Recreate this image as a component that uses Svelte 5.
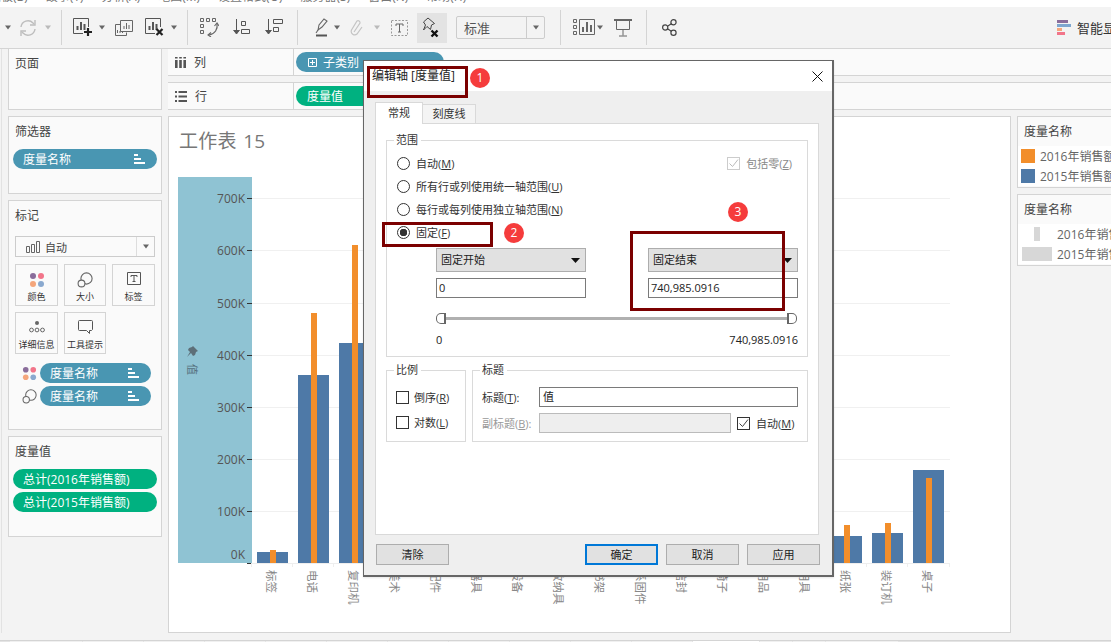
<script>
  const menu = ['仪表板(B)', '故事(T)', '分析(A)', '地图(M)', '设置格式(O)', '服务器(S)', '窗口(N)', '帮助(H)'];
  const ticks = [['700K', 198], ['600K', 250], ['500K', 303], ['400K', 355], ['300K', 407], ['200K', 459], ['100K', 511], ['0K', 563]];
  const bars = [
    ['标签', 552, 550], ['电话', 375, 313], ['复印机', 343, 245], ['美术', 500, 480], ['配件', 480, 470],
    ['器具', 400, 380], ['设备', 420, 400], ['收纳具', 450, 440], ['书架', 400, 380], ['系固件', 540, 530],
    ['信封', 530, 520], ['椅子', 340, 320], ['用品', 530, 520], ['用具', 530, 520], ['纸张', 536, 525],
    ['装订机', 533, 523], ['桌子', 470, 478]
  ];
  const tabs = [72, 60, 60, 60, 60, 60, 60, 60, 60, 60, 60, 66, 32, 32, 72];
</script>

{#snippet arrow(cls)}
  <svg class={cls} width="8" height="5" viewBox="0 0 8 5"><path d="M1 .5h6L4 4.500z" fill="#666" /></svg>
{/snippet}

{#snippet stair()}
  <svg class="stair" width="11" height="11" viewBox="0 0 11 11"><path d="M0 0h4v2H0zM0 4h7v2H0zM0 8h11v2H0z" fill="#fff" /></svg>
{/snippet}

{#snippet dots(size)}
  <svg width={size} height={size} viewBox="0 0 16 16">
    <circle cx="4" cy="4" r="3" fill="#8a6d9b" /><circle cx="12" cy="4" r="3" fill="#f2758a" />
    <circle cx="4" cy="12" r="3" fill="#f4a67c" /><circle cx="12" cy="12" r="3" fill="#8aa9cf" />
  </svg>
{/snippet}

{#snippet circles(size)}
  <svg width={size} height={size} viewBox="0 0 16 16" fill="#fafafa" stroke="#666" stroke-width="1.1">
    <circle cx="9.5" cy="6.5" r="5.6" /><circle cx="4.5" cy="11.5" r="3.4" />
  </svg>
{/snippet}

<div class="app">
  <div class="menu">
    {#each menu as m}<span>{m}</span>{/each}
  </div>

  <div class="toolbar">
    {@render arrow('ml4')}
    <svg class="ml7" width="18" height="18" viewBox="0 0 18 18" fill="none" stroke="#bdbdbd" stroke-width="1.4">
      <path d="M2 8a7 7 0 0 1 12-4l1 1M16 10a7 7 0 0 1-12 4l-1-1" />
      <path d="M16 1v5h-5M2 17v-5h5" />
    </svg>
    {@render arrow('ml7 dim')}
    <i class="sep ml9"></i>
    <svg class="ml11" width="20" height="19" viewBox="0 0 20 19" fill="none" stroke="#555">
      <path d="M15.5 9V.5H.5v15H10" />
      <path d="M4.5 12V8M8 12V4M11.5 12V6" stroke-width="2" />
      <path d="M15 10v8M11 14h8" stroke="#222" stroke-width="2.2" />
    </svg>
    {@render arrow('ml5')}
    <svg class="ml9" width="18" height="16" viewBox="0 0 18 16" fill="none" stroke="#666">
      <path d="M5.5 4.5H.5v11h11v-3" /><path d="M5.5 .5h12v11h-12z" fill="#f3f3f3" />
      <path d="M9 9V6M11.5 9V3M14 9V5M2.5 13v-3M5 13v-2M7.500 13v-1" />
    </svg>
    <svg class="ml12" width="20" height="19" viewBox="0 0 20 19" fill="none" stroke="#555">
      <path d="M15.5 9V.5H.5v15H10" />
      <path d="M4.500 12V8M8 12V4M11.500 12V6" stroke-width="2" />
      <path d="M11.500 11l6 6M17.500 11l-6 6" stroke="#222" stroke-width="2.200" />
    </svg>
    {@render arrow('ml5')}
    <i class="sep ml9"></i>
    <svg class="ml12" width="19" height="19" viewBox="0 0 19 19" fill="none" stroke="#666">
      <path d="M.5 .5h3v3h-3zM6.500 .5h3v3h-3zM12.500 .500h3v3h-3zM.5 6.500h3v3h-3zM.5 12.500h3v3h-3z" />
      <path d="M17 6c1 5-2 10-8 11" stroke-width="1.200" />
      <path d="M14.500 8L17 5l2 3M11 14.500L8 17l3 2" stroke-width="1.100" />
    </svg>
    <svg class="ml14" width="17" height="17" viewBox="0 0 17 17" fill="none" stroke="#555">
      <path d="M3.500 0v14M.5 11l3 4 3-4" fill="#555" />
      <path d="M8.500 2.500h4v4h-4zM8.500 10.500h8v4h-8z" />
    </svg>
    <svg class="ml15" width="18" height="17" viewBox="0 0 18 17" fill="none" stroke="#555">
      <path d="M3.500 0v14M.5 11l3 4 3-4" fill="#555" />
      <path d="M8.500 .5h9v4h-9zM8.500 8.500h5v4h-5z" />
    </svg>
    <i class="sep ml14"></i>
    <svg class="ml15" width="15" height="19" viewBox="0 0 15 19" fill="none" stroke="#666" stroke-width="1.100">
      <path d="M5 12l1-5 5-6 3 2-5 6z" /><path d="M5 12l-2 3" /><path d="M3 17.500h11" stroke="#555" stroke-width="2" />
    </svg>
    {@render arrow('ml5')}
    <svg class="ml9" width="13" height="18" viewBox="0 0 13 18" fill="none" stroke="#c4c4c4" stroke-width="1.200">
      <path d="M4 13l6-9a2 2 0 0 0-3-2L1.500 11a3.500 3.500 0 0 0 5.500 4l5-7" />
    </svg>
    {@render arrow('ml10 dim')}
    <svg class="ml10" width="17" height="16" viewBox="0 0 17 16" fill="none" stroke="#999">
      <path d="M.5 .5h16v15H.5z" stroke-dasharray="2 1.500" />
      <path d="M5 6V4h7v2M8.500 4v8M7 12h3" stroke="#666" />
    </svg>
    <div class="pin ml9">
      <svg width="22" height="22" viewBox="0 0 22 22" fill="none" stroke="#444">
        <path d="M6 1l6.500 5.500-3 1.500-1 4.500-3.500-3L1.500 13 3.500 8 1.500 5z" fill="#e3e3e3" transform="translate(1 0)" />
        <path d="M10.500 13.500l6 6M16.500 13.500l-6 6" stroke="#111" stroke-width="2.400" />
      </svg>
    </div>
    <div class="combo ml9"><span>标准</span><b>{@render arrow('')}</b></div>
    <i class="sep ml15"></i>
    <svg class="ml12" width="22" height="17" viewBox="0 0 22 17" fill="none" stroke="#666">
      <path d="M.5 .5h3v3h-3zM.5 6.500h3v3h-3zM.5 12.500h3v3h-3zM6.500 .5h15v15h-15z" />
      <path d="M10 13V8M14 13V3M18 13V6" stroke-width="2" />
    </svg>
    {@render arrow('ml1')}
    <svg class="ml10" width="18" height="18" viewBox="0 0 18 18" fill="none" stroke="#666">
      <path d="M0 1h18" stroke-width="2" /><path d="M2.500 1.500h13v9h-13zM9 10.500v6M5 17h8" />
    </svg>
    <i class="sep ml14"></i>
    <svg class="ml15" width="15" height="17" viewBox="0 0 15 17" fill="none" stroke="#444" stroke-width="1.200">
      <circle cx="3.200" cy="8.500" r="2.600" /><circle cx="11.500" cy="3.200" r="2.600" /><circle cx="11.500" cy="13.800" r="2.600" />
      <path d="M5.500 7.200l3.800-2.500M5.500 9.800l3.800 2.500" />
    </svg>
    <div class="smart">
      <svg width="14" height="15" viewBox="0 0 14 15">
        <path d="M0 0h11v3H0z" fill="#8a6d9b" /><path d="M0 4h14v3H0z" fill="#7ea6cf" />
        <path d="M0 8h5v3H0z" fill="#f4a67c" /><path d="M0 12h8v3H0z" fill="#f2758a" />
      </svg>
      <span>智能显示</span>
    </div>
  </div>

  <div class="workspace">
    <aside class="left">
      <section class="card page"><h3>页面</h3></section>
      <section class="card filter">
        <h3>筛选器</h3>
        <div class="pill blue wide"><span>度量名称</span>{@render stair()}</div>
      </section>
      <section class="card marks">
        <h3>标记</h3>
        <div class="select">
          <svg width="14" height="12" viewBox="0 0 14 12" fill="none" stroke="#666"><path d="M.5 5.500h3v6h-3zM5.500 3.500h3v8h-3zM10.500 .5h3v11h-3z" /></svg>
          <span>自动</span>
          <b>{@render arrow('')}</b>
        </div>
        <div class="mark-grid">
          <div class="mk">{@render dots(16)}<span>颜色</span></div>
          <div class="mk">{@render circles(16)}<span>大小</span></div>
          <div class="mk">
            <svg width="14" height="13" viewBox="0 0 14 13" fill="none" stroke="#555"><path d="M.5 .5h13v12H.5z" /><path d="M4 5V3.500h6V5M7 3.500v6M5.500 9.500h3" /></svg>
            <span>标签</span>
          </div>
          <div class="mk">
            <svg width="16" height="14" viewBox="0 0 16 14" fill="#666"><circle cx="8" cy="3" r="2" /><g fill="none" stroke="#666"><circle cx="2.500" cy="10" r="1.900" /><circle cx="8" cy="10" r="1.900" /><circle cx="13.500" cy="10" r="1.900" /></g></svg>
            <span>详细信息</span>
          </div>
          <div class="mk">
            <svg width="15" height="14" viewBox="0 0 15 14" fill="none" stroke="#555"><path d="M1.500 .5h12a1 1 0 0 1 1 1v8l-1 1h-2v3l-3-3h-7a1 1 0 0 1-1-1v-8a1 1 0 0 1 1-1z" /></svg>
            <span>工具提示</span>
          </div>
        </div>
        <div class="encoding">
          <span class="enc-ic">{@render dots(15)}</span>
          <div class="pill blue"><span>度量名称</span>{@render stair()}</div>
        </div>
        <div class="encoding">
          <span class="enc-ic">{@render circles(15)}</span>
          <div class="pill blue"><span>度量名称</span>{@render stair()}</div>
        </div>
      </section>
      <section class="card values">
        <h3>度量值</h3>
        <div class="pill green wide"><span>总计(2016年销售额)</span></div>
        <div class="pill green wide"><span>总计(2015年销售额)</span></div>
      </section>
    </aside>

    <main class="center">
      <div class="shelf">
        <div class="shelf-label">
          <svg width="11" height="11" viewBox="0 0 11 11" fill="#555"><path d="M0 3h2.600v8H0zM4.200 3h2.600v8H4.200zM8.400 3H11v8H8.400zM0 0h2.600v1.500H0zM4.200 0h2.600v1.500H4.200zM8.400 0H11v1.500H8.400z" /></svg>
          <span>列</span>
        </div>
        <div class="pill blue shelf-pill">
          <svg width="9" height="9" viewBox="0 0 9 9" fill="none" stroke="#fff"><path d="M.5 .5h8v8h-8zM4.500 2v5M2 4.500h5" /></svg>
          <span>子类别</span>
        </div>
      </div>
      <div class="shelf second">
        <div class="shelf-label">
          <svg width="12" height="11" viewBox="0 0 12 11" fill="#555"><path d="M0 0h2v2H0zM3.500 0H12v2H3.500zM0 4.500h2v2H0zM3.500 4.500H12v2H3.500zM0 9h2v2H0zM3.500 9H12v2H3.500z" /></svg>
          <span>行</span>
        </div>
        <div class="pill green shelf-pill"><span>度量值</span></div>
      </div>

      <div class="body">
        <section class="sheet">
          <h1>工作表 15</h1>
          <svg class="chart" width="841" height="466" viewBox="169 165 841 466">
            <rect x="178" y="177" width="74" height="386" fill="#8fc3d3" />
            <path d="M193 346l5 5-2 1-1 3-2 1-2-3-4 4 3-5-2-2 1-2 3-1z" fill="#5d6f78" />
            <text class="band-text" transform="rotate(90 188 364)" x="188" y="364">值</text>
            {#each ticks as [label, y]}
              <line x1="252" x2="950" y1={y + .5} y2={y + .5} stroke="#f0f0f0" />
              <line x1="247" x2="252" y1={y + .5} y2={y + .5} stroke="#333" />
              <text class="tick" x="245" y={label === '0K' ? y - 4 : y + 4.500} text-anchor="end">{label}</text>
            {/each}
            {#each bars as [name, blue, orange], i}
              {@const x = 257 + i * 41}
              <rect {x} y={blue} width="31" height={563 - blue} fill="#4e79a7" />
              <rect x={x + 13} y={orange} width="6" height={563 - orange} fill="#f28e2b" />
              <line x1={x - 5.500} x2={x - 5.500} y1="563" y2="567" stroke="#eee" />
              <text class="cat" transform="rotate(90 {x + 10} 570)" x={x + 10} y="570">{name}</text>
            {/each}
            <line x1="252" x2="950" y1="563.500" y2="563.500" stroke="#eee" />
            <line x1="949.500" x2="949.500" y1="563" y2="567" stroke="#eee" />
          </svg>
        </section>
        <aside class="legends">
          <section class="legend">
            <h4>度量名称</h4>
            <div class="lg-row"><i class="sw orange"></i><span>2016年销售额</span></div>
            <div class="lg-row"><i class="sw steel"></i><span>2015年销售额</span></div>
          </section>
          <section class="legend">
            <h4>度量名称</h4>
            <div class="lg-row size"><span class="sz-wrap"><i class="thin"></i></span><span>2016年销售额</span></div>
            <div class="lg-row size"><span class="sz-wrap"><i class="fat"></i></span><span>2015年销售额</span></div>
          </section>
        </aside>
      </div>
    </main>
  </div>

  <div class="tabs">
    {#each tabs as w, i}<span class="tab" class:on={i === 11} style:width="{w}px"></span>{/each}
  </div>

  <div class="dialog">
    <header class="dlg-title">
      <span>编辑轴 [度量值]</span>
      <svg width="11" height="11" viewBox="0 0 11 11" stroke="#111" fill="none"><path d="M.5 .5l10 10M10.500 .5l-10 10" /></svg>
    </header>
    <div class="dlg-body">
      <div class="dlg-tabs"><span class="dlg-tab on">常规</span><span class="dlg-tab">刻度线</span></div>
      <div class="panel">
        <div class="group range">
          <span class="legend-t">范围</span>
          <div class="radio-row first">
            <label class="rd"><i class="radio"></i><span>自动(<u>M</u>)</span></label>
            <label class="rd disabled"><i class="check dis"><svg width="11" height="11" viewBox="0 0 11 11" fill="none" stroke="#bbb"><path d="M1.500 5.500l3 3 5.500-7" /></svg></i><span>包括零(<u>Z</u>)</span></label>
          </div>
          <label class="rd radio-row"><i class="radio"></i><span>所有行或列使用统一轴范围(<u>U</u>)</span></label>
          <label class="rd radio-row"><i class="radio"></i><span>每行或每列使用独立轴范围(<u>N</u>)</span></label>
          <label class="rd radio-row"><i class="radio sel"></i><span>固定(<u>F</u>)</span></label>
          <div class="fixed">
            <div class="dd"><span>固定开始</span><svg width="9" height="5" viewBox="0 0 9 5"><path d="M0 0h9L4.500 5z" fill="#111" /></svg></div>
            <div class="dd"><span>固定结束</span><svg width="9" height="5" viewBox="0 0 9 5"><path d="M0 0h9L4.500 5z" fill="#111" /></svg></div>
            <div class="field">0</div>
            <div class="field">740,985.0916</div>
          </div>
          <div class="slider"><i class="hd l"></i><i class="track"></i><i class="hd r"></i></div>
          <div class="ends"><span>0</span><span>740,985.0916</span></div>
        </div>
        <div class="row2">
          <div class="group scale">
            <span class="legend-t">比例</span>
            <label class="rd cb"><i class="check"></i><span>倒序(<u>R</u>)</span></label>
            <label class="rd cb"><i class="check"></i><span>对数(<u>L</u>)</span></label>
          </div>
          <div class="group titlebox">
            <span class="legend-t">标题</span>
            <div class="title-grid">
              <span>标题(<u>T</u>):</span>
              <div class="field full">值</div>
              <span class="muted">副标题(<u>B</u>):</span>
              <div class="sub-row">
                <div class="field off"></div>
                <label class="rd"><i class="check"><svg width="11" height="11" viewBox="0 0 11 11" fill="none" stroke="#444"><path d="M1.500 5.500l3 3 5.500-7" /></svg></i><span>自动(<u>M</u>)</span></label>
              </div>
            </div>
          </div>
        </div>
      </div>
      <footer class="dlg-foot">
        <button>清除</button>
        <span class="grow"></span>
        <button class="primary">确定</button>
        <button>取消</button>
        <button>应用</button>
      </footer>
    </div>
  </div>

  <i class="mark-box a"></i>
  <i class="mark-box b"></i>
  <i class="mark-box c"></i>
  <span class="badge one">1</span>
  <span class="badge two">2</span>
  <span class="badge three">3</span>
</div>

<style>
  :global(body) { margin: 0; }
  * { box-sizing: border-box; }
  .app {
    position: relative; width: 1111px; height: 642px; overflow: hidden; background: #f3f3f3;
    font-family: "Open Sans", "Noto Sans CJK SC", sans-serif; font-size: 12px; color: #444;
  }
  .menu { height: 7px; background: #fff; overflow: hidden; display: flex; gap: 18px; margin-left: 0; padding-left: 0; }
  .menu span { margin-top: -11px; font-size: 12px; line-height: 16px; color: #777; white-space: nowrap; flex: none; }
  .menu span:first-child { margin-left: -23px; }

  .toolbar { height: 42px; display: flex; align-items: center; border-bottom: 1px solid #d4d4d4; }
  .toolbar > svg { flex: none; }
  .sep { width: 1px; height: 35px; background: #d4d4d4; flex: none; }
  :global(.ml1) { margin-left: 1px; } :global(.ml4) { margin-left: 4px; } :global(.ml5) { margin-left: 5px; }
  :global(.ml7) { margin-left: 7px; } :global(.ml9) { margin-left: 9px; } :global(.ml10) { margin-left: 10px; }
  :global(.ml11) { margin-left: 11px; } :global(.ml12) { margin-left: 12px; } :global(.ml14) { margin-left: 14px; }
  :global(.ml15) { margin-left: 15px; } :global(.dim) { opacity: .4; }
  .pin { width: 30px; height: 30px; background: #e3e3e3; display: flex; align-items: center; justify-content: center; flex: none; }
  .combo { width: 89px; height: 23px; border: 1px solid #ccc; border-radius: 2px; display: flex; align-items: center; background: #f3f3f3; font-size: 13px; color: #555; flex: none; }
  .combo span { flex: 1; padding-left: 7px; }
  .combo b { width: 18px; height: 100%; border-left: 1px solid #ccc; display: flex; align-items: center; justify-content: center; }
  .smart { margin-left: auto; width: 54px; flex: none; display: flex; align-items: center; gap: 6px; white-space: nowrap; font-size: 13px; color: #333; }
  .smart svg { flex: none; }

  .workspace { display: flex; height: 584px; padding-left: 1px; }
  .left { width: 167px; padding-left: 6px; padding-right: 6px; border-left: 1px solid #e2e2e2; display: flex; flex-direction: column; gap: 6px; flex: none; }
  .card { border: 1px solid #d4d4d4; background: #fafafa; padding: 0 0 0 6px; }
  .card h3 { margin: 0; font-size: 12px; font-weight: 400; color: #444; line-height: 16px; }
  .page { height: 61px; border-top: 0; padding-top: 7px; }
  .filter { height: 78px; padding-top: 7px; padding-left: 4px; }
  .filter h3, .values h3 { padding-left: 2px; }
  .marks { height: 230px; padding-top: 7px; }
  .values { height: 101px; padding-top: 7px; padding-left: 4px; }
  .filter .pill { margin-top: 9px; }
  .values .pill:first-of-type { margin-top: 9px; }
  .values .pill + .pill { margin-top: 3px; }

  .pill { height: 20px; border-radius: 10px; color: #fff; display: flex; align-items: center; padding-left: 10px; white-space: nowrap; }
  .blue { background: #4996b2; }
  .green { background: #00b180; }
  .wide { width: 144px; }
  .stair { margin-left: auto; margin-right: 12px; }

  .select { width: 140px; height: 21px; margin-top: 12px; border: 1px solid #ccc; background: #fafafa; display: flex; align-items: center; padding-left: 10px; gap: 5px; font-size: 11px; }
  .select b { margin-left: auto; width: 18px; height: 100%; border-left: 1px solid #ddd; display: flex; align-items: center; justify-content: center; }
  .mark-grid { display: grid; grid-template-columns: 43px 42px 43px; gap: 6px; margin-top: 7px; }
  .mk { height: 42px; border: 1px solid #d4d4d4; display: flex; flex-direction: column; align-items: center; justify-content: space-between; padding: 7px 0 1px; font-size: 9px; white-space: nowrap; line-height: 14px; color: #333; }
  .encoding { display: flex; align-items: center; margin-top: 3px; }
  .mark-grid + .encoding { margin-top: 9px; }
  .enc-ic { width: 25px; padding-left: 7px; display: flex; }
  .encoding .pill { width: 111px; }
  .encoding .stair { margin-right: 12px; }

  .center { flex: 1; min-width: 0; display: flex; flex-direction: column; }
  .shelf { height: 27px; flex: none; display: flex; border-bottom: 1px solid #d4d4d4; background: #fafafa; }
  .shelf.second { height: 28px; margin-top: 6px; border-top: 1px solid #d4d4d4; }
  .shelf-label { width: 126px; border-right: 1px solid #d4d4d4; display: flex; align-items: center; gap: 8px; padding-left: 7px; flex: none; }
  .shelf-pill { margin: 3px 0 0 2px; width: 148px; padding-left: 12px; gap: 6px; }
  .shelf.second .shelf-pill { margin-top: 3px; width: 80px; padding-left: 11px; }
  .body { display: flex; gap: 6px; margin-top: 6px; height: 517px; }
  .sheet { width: 843px; flex: none; border: 1px solid #d4d4d4; background: #fff; }
  .sheet h1 { margin: 0; height: 48px; padding: 11px 0 0 10px; font-size: 19px; line-height: 26px; font-weight: 400; color: #777; }
  .sheet h1 { word-spacing: 1px; letter-spacing: .3px; }
  .chart { display: block; }
  .tick { font-size: 12px; fill: #555; }
  .cat { font-size: 11.500px; fill: #888; }
  .band-text { font-size: 11px; fill: #55707c; }

  .legends { display: flex; flex-direction: column; gap: 6px; flex: 1; min-width: 0; }
  .legend { height: 72px; border: 1px solid #d4d4d4; border-right: 0; background: #fafafa; overflow: hidden; white-space: nowrap; }
  .legend h4 { margin: 0; height: 29px; padding: 7px 0 0 6px; font-size: 12px; font-weight: 400; line-height: 16px; }
  .lg-row { height: 20px; display: flex; align-items: center; gap: 5px; padding-left: 3px; background: #fff; color: #666; }
  .sw { width: 14px; height: 14px; flex: none; }
  .orange { background: #f28e2b; } .steel { background: #4e79a7; }
  .size { gap: 5px; padding-left: 4px; }
  .sz-wrap { width: 30px; height: 14px; display: flex; justify-content: center; flex: none; }
  .thin { width: 6px; height: 14px; background: #d7d7d7; }
  .fat { width: 30px; height: 14px; background: #d7d7d7; }

  .tabs { display: flex; height: 2px; padding-left: 10px; border-top: 1px solid #d4d4d4; gap: 1px; margin-top: 7px; background: #e4e4e4; }
  .tab { height: 100%; background: #f0f0f0; }
  .tab.on { background: #fff; }

  .dialog { position: absolute; left: 363px; top: 60px; width: 471px; height: 517px; border: 1px solid #666; border-width: 1px 2px 2px 1px; background: #efefef; color: #333; font-size: 11px; box-shadow: 0 1px 2px rgba(0, 0, 0, .1); }
  .dlg-title { height: 30px; background: #fff; display: flex; align-items: center; justify-content: space-between; padding: 0 9px 0 8px; font-size: 12px; color: #222; }
  .dlg-title span { margin-top: -2px; }
  .dlg-body { padding: 11px 13px 0 11px; }
  .dlg-tabs { display: flex; height: 21px; align-items: flex-end; position: relative; }
  .dlg-tab { width: 54px; height: 19px; background: #f4f4f4; border: 1px solid #d9d9d9; border-bottom: 0; text-align: center; line-height: 18px; margin-left: -1px; }
  .dlg-tab.on { width: 48px; height: 22px; margin: 0 0 -1px; background: #fff; line-height: 20px; position: relative; z-index: 1; }
  .panel { height: 412px; background: #fff; border: 1px solid #d9d9d9; padding: 16px 10px 0; }
  .group { border: 1px solid #dadada; position: relative; }
  .legend-t { position: absolute; left: 7px; top: -9px; background: #fff; padding: 0 3px 0 2px; line-height: 15px; }
  .range { height: 217px; padding: 11px 9px 0 10px; }
  .radio-row { height: 23px; display: flex; align-items: center; justify-content: space-between; }
  .radio-row.first { padding-right: 6px; }
  .rd { display: flex; align-items: center; gap: 6px; white-space: nowrap; }
  .rd span { margin-top: -1px; }
  .rd.radio-row { justify-content: flex-start; }
  .disabled { color: #888; gap: 6px; }
  .radio { width: 13px; height: 13px; border: 1px solid #333; border-radius: 50%; display: block; flex: none; background: #fff; }
  .radio.sel { background: radial-gradient(circle, #333 0 3.500px, #fff 4px); }
  .check { width: 13px; height: 13px; border: 1px solid #333; display: flex; align-items: center; justify-content: center; flex: none; background: #fff; }
  .check.dis { border-color: #ccc; }
  .fixed { margin: 4px 0 0 39px; display: grid; grid-template-columns: 150px 150px; column-gap: 62px; row-gap: 6px; }
  .dd { height: 24px; background: #e1e1e1; border: 1px solid #adadad; display: flex; align-items: center; justify-content: space-between; padding: 0 5px 2px 4px; color: #222; }
  .dd svg { margin-top: 2px; }
  .field { height: 20px; border: 1px solid #7a7a7a; background: #fff; padding-left: 2px; line-height: 18px; color: #222; }
  .slider { margin: 15px 0 0 39px; width: 361px; height: 11px; display: flex; align-items: center; }
  .track { flex: 1; height: 3px; background: #b0b0b0; }
  .hd { width: 10px; height: 11px; border: 1px solid #666; background: #fff; flex: none; }
  .hd.l { border-radius: 5px 0 0 5px; border-right-width: 2px; }
  .hd.r { border-radius: 0 5px 5px 0; border-left-width: 2px; }
  .ends { margin: 9px 0 0 39px; width: 362px; display: flex; justify-content: space-between; line-height: 14px; color: #222; }
  .row2 { display: flex; gap: 6px; margin-top: 13px; }
  .scale { width: 80px; height: 72px; padding: 20px 0 0 9px; }
  .cb { gap: 5px; height: 13px; margin-bottom: 12px; }
  .titlebox { width: 336px; height: 72px; padding: 16px 9px 0 9px; }
  .title-grid { display: grid; grid-template-columns: 57px 1fr; row-gap: 6px; align-items: center; }
  .full { width: 259px; padding-left: 3px; }
  .muted { color: #999; }
  .sub-row { display: flex; align-items: center; gap: 6px; }
  .off { width: 192px; background: #eee; border-color: #bbb; }
  .dlg-foot { display: flex; gap: 8px; margin-top: 9px; padding-left: 1px; margin-right: -1px; }
  .grow { flex: 1; }
  button { width: 73px; height: 21px; font: inherit; background: #e1e1e1; border: 1px solid #adadad; padding: 0 0 2px; color: #222; }
  .primary { border: 2px solid #0078d7; }

  .mark-box { position: absolute; border: 3px solid #7b0000; display: block; pointer-events: none; }
  .mark-box.a { left: 367px; top: 66px; width: 101px; height: 32px; }
  .mark-box.b { left: 382px; top: 222px; width: 111px; height: 25px; }
  .mark-box.c { left: 630px; top: 231px; width: 155px; height: 80px; }
  .badge { position: absolute; width: 20px; height: 20px; border-radius: 50%; background: #f53c3c; color: #fff; text-align: center; line-height: 20px; font-size: 12px; }
  .one { left: 470px; top: 68px; }
  .two { left: 504px; top: 223px; }
  .three { left: 728px; top: 202px; }
</style>
